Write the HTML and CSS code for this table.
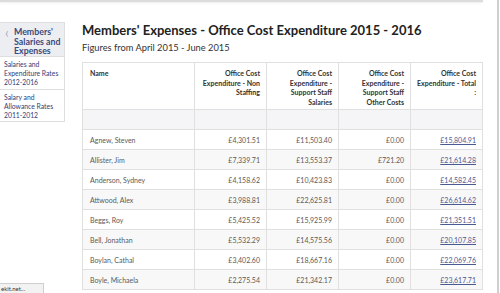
FILE: index.html
```html
<!DOCTYPE html>
<html>
<head>
<meta charset="utf-8">
<link rel="stylesheet" href="styles.css">
</head>
<body>
<div class="page">
  <div class="topbar"></div>
  <div class="layout">
    <aside class="sidebar">
      <div class="side-head">
        <span class="chev">&lsaquo;</span>
        <span class="side-title">Members' Salaries and Expenses</span>
      </div>
      <a class="side-item">Salaries and Expenditure Rates 2012-2016</a>
      <a class="side-item">Salary and Allowance Rates 2011-2012</a>
    </aside>
    <main class="main">
      <h1 class="title">Members' Expenses - Office Cost Expenditure 2015 - 2016</h1>
      <p class="subtitle">Figures from April 2015 - June 2015</p>
      <table class="data">
        <colgroup>
          <col class="c-name"><col class="c-num"><col class="c-num"><col class="c-num"><col class="c-num">
        </colgroup>
        <thead>
          <tr>
            <th class="left">Name</th>
            <th>Office Cost Expenditure - Non Staffing</th>
            <th>Office Cost Expenditure - Support Staff Salaries</th>
            <th>Office Cost Expenditure - Support Staff Other Costs</th>
            <th>Office Cost Expenditure - Total<br>:</th>
          </tr>
        </thead>
        <tbody>
          <tr class="blank"><td></td><td></td><td></td><td></td><td></td></tr>
          <tr><td class="left">Agnew, Steven</td><td>£4,301.51</td><td>£11,503.40</td><td>£0.00</td><td><a>£15,804.91</a></td></tr>
          <tr class="alt"><td class="left">Allister, Jim</td><td>£7,339.71</td><td>£13,553.37</td><td>£721.20</td><td><a>£21,614.28</a></td></tr>
          <tr><td class="left">Anderson, Sydney</td><td>£4,158.62</td><td>£10,423.83</td><td>£0.00</td><td><a>£14,582.45</a></td></tr>
          <tr class="alt"><td class="left">Attwood, Alex</td><td>£3,988.81</td><td>£22,625.81</td><td>£0.00</td><td><a>£26,614.62</a></td></tr>
          <tr><td class="left">Beggs, Roy</td><td>£5,425.52</td><td>£15,925.99</td><td>£0.00</td><td><a>£21,351.51</a></td></tr>
          <tr class="alt"><td class="left">Bell, Jonathan</td><td>£5,532.29</td><td>£14,575.56</td><td>£0.00</td><td><a>£20,107.85</a></td></tr>
          <tr><td class="left">Boylan, Cathal</td><td>£3,402.60</td><td>£18,667.16</td><td>£0.00</td><td><a>£22,069.76</a></td></tr>
          <tr class="alt"><td class="left">Boyle, Michaela</td><td>£2,275.54</td><td>£21,342.17</td><td>£0.00</td><td><a>£23,617.71</a></td></tr>
        </tbody>
      </table>
    </main>
  </div>
  <div class="status">ekit.net...</div>
</div>
</body>
</html>
```
FILE: styles.css
```css
html, body {
  margin: 0;
  padding: 0;
  background: #fff;
  overflow: hidden;
}
body {
  font-family: Lato, "Liberation Sans", sans-serif;
  color: #333;
}
.page {
  width: 497px;
  height: 293px;
  border-right: 2px solid #cfcfcf;
  box-sizing: content-box;
  overflow: hidden;
  position: relative;
}
.topbar {
  width: 483px;
  height: 2px;
  background: #dcdcdc;
  box-shadow: 0 1px 2px rgba(0,0,0,0.08);
}
.layout {
  display: flex;
  align-items: flex-start;
}
.sidebar {
  width: 65px;
  margin-top: 20px;
  border: 1px solid #dedede;
  border-left: none;
  box-sizing: border-box;
  flex-shrink: 0;
}
.side-head {
  background: #eceef2;
  display: flex;
  padding: 4px 2px 4px 5px;
  border-bottom: 1px solid #dedede;
  height: 34px;
  box-sizing: border-box;
}
.chev {
  color: #8a93a8;
  font-size: 15px;
  font-weight: 300;
  line-height: 10px;
  width: 9px;
  flex-shrink: 0;
}
.side-title {
  font-weight: 700;
  font-size: 8.8px;
  line-height: 9.5px;
  color: #3b4b7d;
}
.side-item {
  display: block;
  font-size: 6.8px;
  line-height: 9px;
  color: #2f4078;
  padding: 3px 3px 4px 4px;
  height: 32px;
  box-sizing: border-box;
}
.side-item + .side-item {
  border-top: 1px solid #dedede;
}
.main {
  padding-left: 17px;
  flex: 1;
}
.title {
  margin: 20px 0 0;
  font-size: 13px;
  line-height: 16px;
  font-weight: 700;
  color: #222;
}
.subtitle {
  margin: 4px 0 0;
  font-size: 9.3px;
  line-height: 12px;
  color: #333;
}
.data {
  margin-top: 8px;
  border-collapse: collapse;
  width: 401px;
  table-layout: fixed;
  font-size: 7px;
}
.c-name { width: 112px; }
.c-num { width: 72px; }
.data th, .data td {
  border: 1px solid #e0e0e0;
  text-align: right;
  padding: 0 6px 0 6px;
}
.data th {
  height: 47px;
  vertical-align: top;
  padding-top: 6px;
  box-sizing: border-box;
  font-weight: 700;
  line-height: 9.5px;
  color: #333;
}
.data .left {
  text-align: left;
  padding-left: 7px;
}
.data td {
  height: 20px;
  box-sizing: border-box;
  color: #5a5a5a;
  line-height: 10px;
}
.data tr.blank td {
  height: 20px;
  background: #f5f5f7;
}
.data tr.alt td {
  background: #f8f8f8;
}
.data a {
  color: #4a5b94;
  text-decoration: underline;
}
.status {
  position: absolute;
  left: 0;
  bottom: 0;
  width: 42px;
  height: 9px;
  background: #f2f2f2;
  border: 1px solid #cfcfcf;
  border-left: none;
  border-bottom: none;
  font-size: 6px;
  line-height: 9px;
  color: #333;
  padding-left: 1px;
  box-sizing: content-box;
}
```
